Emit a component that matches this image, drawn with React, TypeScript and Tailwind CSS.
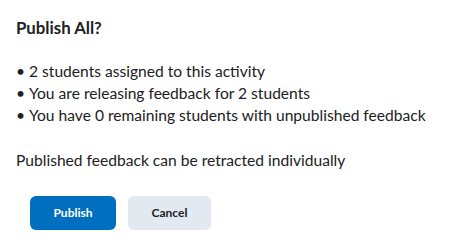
import type { FC } from "react";

const items = [
  "2 students assigned to this activity",
  "You are releasing feedback for 2 students",
  "You have 0 remaining students with unpublished feedback",
];

const App: FC = () => {
  return (
    <div
      className="w-[470px] h-[240px] bg-white text-[#202122] overflow-hidden"
      style={{ fontFamily: "Lato, 'Noto Sans', sans-serif" }}
    >
      <div className="pl-[16px] pt-[16px]">
        <h2 className="font-bold text-[16.8px] leading-[24px]">Publish All?</h2>

        <ul className="mt-[20px]">
          {items.map((item) => (
            <li key={item} className="flex text-[15.6px] leading-[22px]">
              <span className="w-[13px] shrink-0">•</span>
              <span>{item}</span>
            </li>
          ))}
        </ul>

        <p className="mt-[23px] text-[15.6px] leading-[22px]">
          Published feedback can be retracted individually
        </p>

        <div className="mt-[25px] ml-[14px] flex gap-[12px]">
          <button className="w-[86px] h-[34px] rounded-[6px] bg-[#006fbf] text-white text-[12px] font-bold">
            Publish
          </button>
          <button className="w-[83px] h-[34px] rounded-[6px] bg-[#e3e9f1] text-[#202122] text-[12px] font-bold">
            Cancel
          </button>
        </div>
      </div>
    </div>
  );
};

export default App;
